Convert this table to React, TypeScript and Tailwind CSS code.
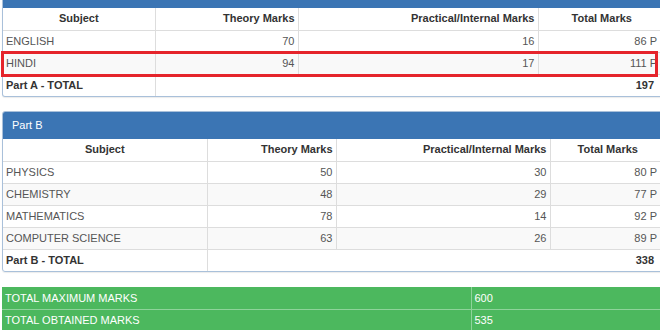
const partA = [
  { subject: "ENGLISH", theory: 70, practical: 16, total: "86 P" },
  { subject: "HINDI", theory: 94, practical: 17, total: "111 P" },
];

const partB = [
  { subject: "PHYSICS", theory: 50, practical: 30, total: "80 P" },
  { subject: "CHEMISTRY", theory: 48, practical: 29, total: "77 P" },
  { subject: "MATHEMATICS", theory: 78, practical: 14, total: "92 P" },
  { subject: "COMPUTER SCIENCE", theory: 63, practical: 26, total: "89 P" },
];

type Row = { subject: string; theory: number; practical: number; total: string };

function MarksTable({
  rows,
  widths,
  totalLabel,
  totalValue,
}: {
  rows: Row[];
  widths: string[];
  totalLabel: string;
  totalValue: number;
}) {
  const td = "h-[22px] border border-[#dddddd] px-[3px] py-0 leading-none";
  return (
    <table className="w-full table-fixed border-collapse border-hidden">
      <colgroup>
        {widths.map((w, i) => (
          <col key={i} style={{ width: w }} />
        ))}
        <col />
      </colgroup>
      <thead>
        <tr className="text-[#333333] font-bold">
          <th className={`${td} text-center`}>Subject</th>
          <th className={`${td} text-right`}>Theory Marks</th>
          <th className={`${td} text-right`}>Practical/Internal Marks</th>
          <th className={`${td} text-center`}>Total Marks</th>
        </tr>
      </thead>
      <tbody>
        {rows.map((r, i) => (
          <tr key={r.subject} className={i % 2 === 1 ? "bg-[#f9f9f9]" : "bg-white"}>
            <td className={`${td} text-left`}>{r.subject}</td>
            <td className={`${td} text-right`}>{r.theory}</td>
            <td className={`${td} text-right`}>{r.practical}</td>
            <td className={`${td} text-right pr-[8px]`}>{r.total}</td>
          </tr>
        ))}
        <tr className="font-bold text-[#333333]">
          <td className={`${td} text-left`}>{totalLabel}</td>
          <td className={`${td} text-right pr-[11px]`} colSpan={3}>
            {totalValue}
          </td>
        </tr>
      </tbody>
    </table>
  );
}

export default function App() {
  return (
    <div
      className="relative w-[660px] h-[330px] overflow-hidden bg-white text-[11px] text-[#555555]"
      style={{ fontFamily: '"Liberation Sans", Arial, sans-serif' }}
    >
      <div className="ml-[2px] w-[664px] flex flex-col">
        {/* Part A, header scrolled off the top */}
        <div className="border border-t-0 border-[#a9c0da] rounded-b-[3px] overflow-hidden shadow-[0_1px_1px_rgba(0,0,0,0.08)]">
          <div className="h-[8px] bg-[#3b75b4]" />
          <MarksTable
            rows={partA}
            widths={["152px", "143px", "240px"]}
            totalLabel="Part A - TOTAL"
            totalValue={197}
          />
        </div>

        {/* Part B */}
        <div className="mt-[14px] border border-[#a9c0da] rounded-[3px] overflow-hidden shadow-[0_1px_1px_rgba(0,0,0,0.08)]">
          <div className="h-[27px] bg-[#3b75b4] text-white flex items-center px-[9px]">Part B</div>
          <MarksTable
            rows={partB}
            widths={["204px", "129px", "214px"]}
            totalLabel="Part B - TOTAL"
            totalValue={338}
          />
        </div>

        {/* Grand totals */}
        <table className="mt-[15px] w-full table-fixed border-collapse bg-[#4cb85e] text-white">
          <colgroup>
            <col style={{ width: "469px" }} />
            <col />
          </colgroup>
          <tbody>
            <tr>
              <td className="h-[22px] px-[3px] border-r border-b border-[#8ed39a]">TOTAL MAXIMUM MARKS</td>
              <td className="h-[22px] px-[3px] border-b border-[#8ed39a]">600</td>
            </tr>
            <tr>
              <td className="h-[22px] px-[3px] border-r border-[#8ed39a]">TOTAL OBTAINED MARKS</td>
              <td className="h-[22px] px-[3px]">535</td>
            </tr>
          </tbody>
        </table>
      </div>

      {/* highlight around HINDI row */}
      <div className="absolute left-[1px] top-[51px] w-[657px] h-[26px] border-[3px] border-[#e5242b] pointer-events-none" />
    </div>
  );
}
